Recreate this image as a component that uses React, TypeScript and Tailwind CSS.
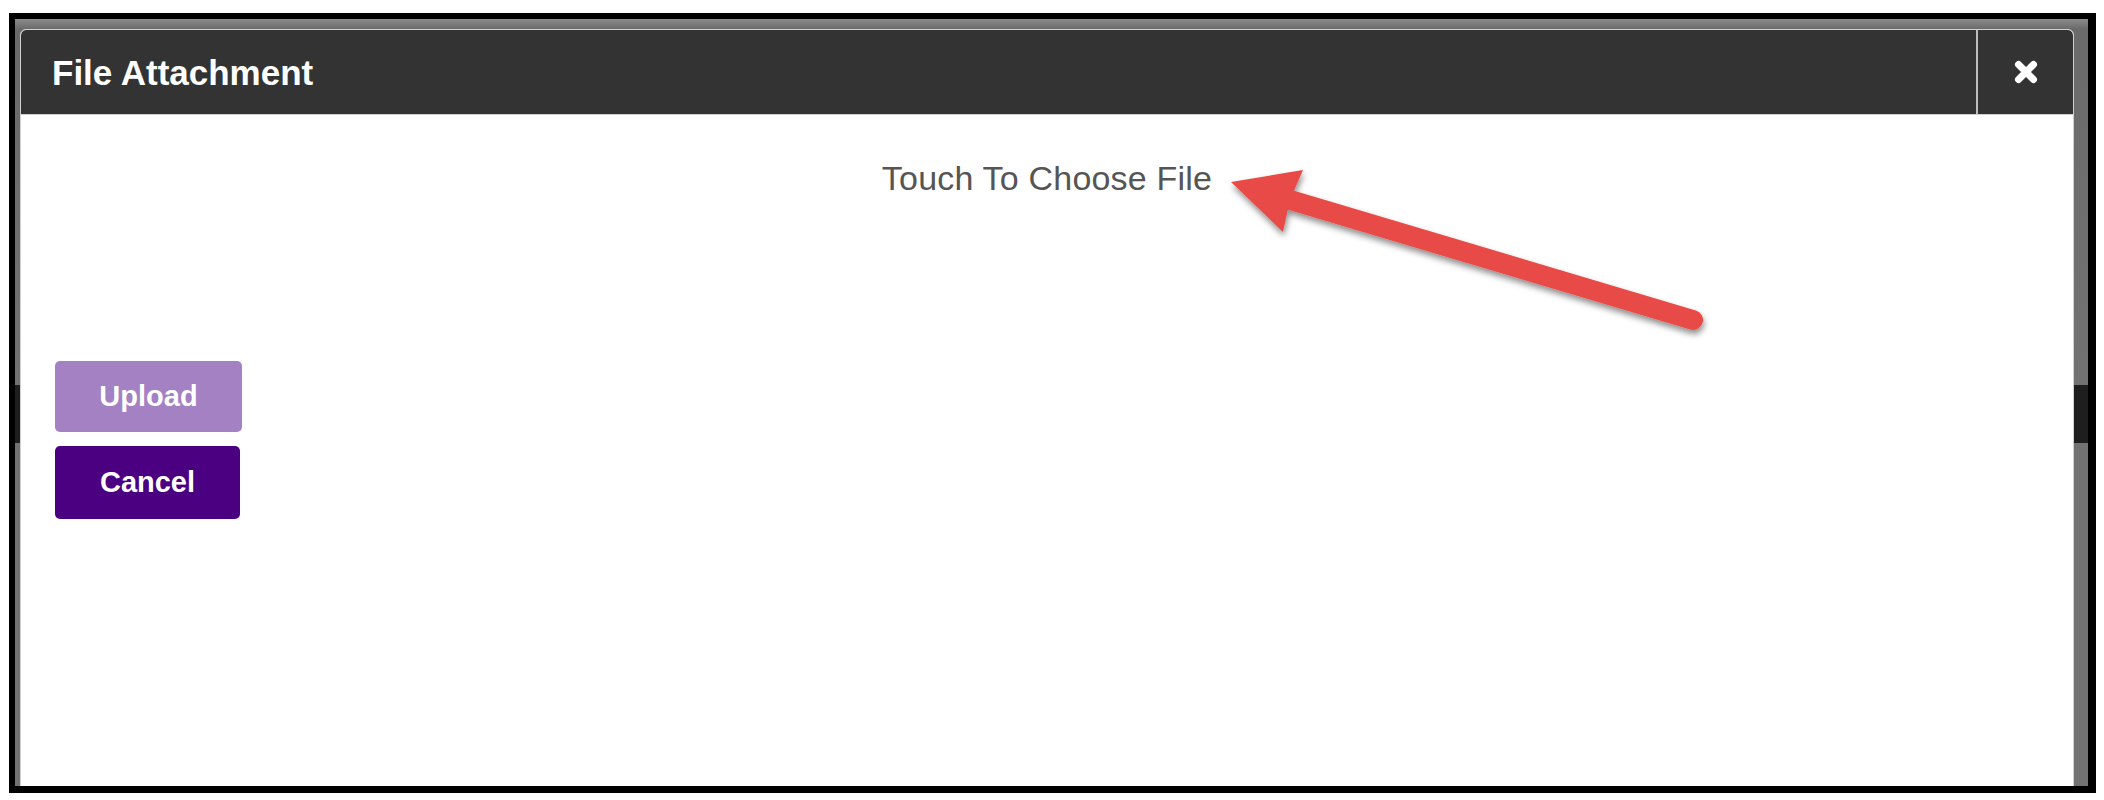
import React from "react";

export default function App() {
  return (
    <div className="relative w-[2104px] h-[800px] bg-white font-['Liberation_Sans',Arial,sans-serif] overflow-hidden">
      <div className="pt-[13px] pl-[9px]">
        <div className="w-[2087px] h-[780px] border-black border-l-[6px] border-t-[6px] border-r-[8px] border-b-[7px] overflow-hidden pl-[5px] pt-[10px] pr-[14px] bg-[linear-gradient(to_bottom,#8c8c8c_0px,#6a6a6a_10px,#727272_366px,#1e1e1e_366px,#1e1e1e_424px,#727272_424px,#727272_100%)]">
          <div className="h-[760px] bg-white rounded-t-[6px] border border-[#d0d0d0] flex flex-col overflow-hidden">
            <div className="h-[85px] shrink-0 bg-[#333333] flex items-stretch border-b border-[#cfcfcf] rounded-t-[5px]">
              <div className="flex-1 flex items-center pl-[31px]">
                <span className="text-white font-bold text-[35px] leading-none">
                  File Attachment
                </span>
              </div>
              <div className="w-[97px] border-l-2 border-[#bdbdbd] flex items-center justify-center">
                <svg width="26" height="26" viewBox="0 0 26 26">
                  <path
                    d="M5.5 5.5 L20.5 20.5 M20.5 5.5 L5.5 20.5"
                    stroke="#ffffff"
                    strokeWidth="7"
                    strokeLinecap="round"
                    fill="none"
                  />
                </svg>
              </div>
            </div>
            <div className="flex flex-col pt-[44px]">
              <div className="text-center text-[34px] leading-[39px] text-[#555555] tracking-[0.2px]">
                Touch To Choose File
              </div>
              <div className="mt-[163px] pl-[34px] flex flex-col gap-[14px]">
                <button className="w-[187px] h-[71px] rounded-[5px] bg-[#a381c3] text-white font-bold text-[29px] flex items-center justify-center">
                  Upload
                </button>
                <button className="w-[185px] h-[73px] rounded-[5px] bg-[#4b0082] text-white font-bold text-[29px] flex items-center justify-center">
                  Cancel
                </button>
              </div>
            </div>
          </div>
        </div>
      </div>
      <svg
        className="absolute left-[1215px] top-[160px]"
        width="520"
        height="190"
        viewBox="0 0 520 190"
      >
        <defs>
          <filter id="arrowShadow" x="-10%" y="-20%" width="120%" height="150%">
            <feDropShadow dx="1" dy="4" stdDeviation="3" floodColor="#000000" floodOpacity="0.45" />
          </filter>
        </defs>
        <g filter="url(#arrowShadow)" fill="#e84c46" stroke="none">
          <line x1="62" y1="36" x2="478" y2="160" stroke="#e84c46" strokeWidth="20" strokeLinecap="round" />
          <polygon points="16,22 88,10 75,40 68,72" />
        </g>
      </svg>
    </div>
  );
}
